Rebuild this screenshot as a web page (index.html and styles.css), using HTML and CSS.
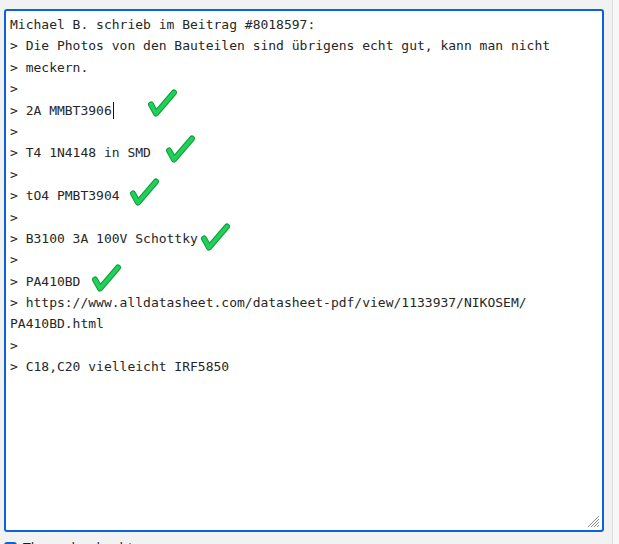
FILE: index.html
```html
<!DOCTYPE html>
<html lang="de">
<head>
<meta charset="utf-8">
<title>Antwort</title>
<link rel="stylesheet" href="styles.css">
</head>
<body>
<div class="column">
  <div class="editor">
    <div class="text">
      <div class="line">Michael B. schrieb im Beitrag #8018597:</div>
      <div class="line">&gt; Die Photos von den Bauteilen sind übrigens echt gut, kann man nicht</div>
      <div class="line">&gt; meckern.</div>
      <div class="line">&gt;</div>
      <div class="line">&gt; 2A MMBT3906<span class="caret"></span></div>
      <div class="line">&gt;</div>
      <div class="line">&gt; T4 1N4148 in SMD</div>
      <div class="line">&gt;</div>
      <div class="line">&gt; tO4 PMBT3904</div>
      <div class="line">&gt;</div>
      <div class="line">&gt; B3100 3A 100V Schottky</div>
      <div class="line">&gt;</div>
      <div class="line">&gt; PA410BD</div>
      <div class="line">&gt; https://www.alldatasheet.com/datasheet-pdf/view/1133937/NIKOSEM/</div>
      <div class="line">PA410BD.html</div>
      <div class="line">&gt;</div>
      <div class="line">&gt; C18,C20 vielleicht IRF5850</div>
    </div>

    <svg class="check c1" viewBox="0 0 29 28"><path class="edge" d="M3,15.5 L8,24.5 L26,3.5"/><path class="fill" d="M3,15.5 L8,24.5 L26,3.5"/></svg>
    <svg class="check c2" viewBox="0 0 29 28"><path class="edge" d="M3,15.5 L8,24.5 L26,3.5"/><path class="fill" d="M3,15.5 L8,24.5 L26,3.5"/></svg>
    <svg class="check c3" viewBox="0 0 29 28"><path class="edge" d="M3,15.5 L8,24.5 L26,3.5"/><path class="fill" d="M3,15.5 L8,24.5 L26,3.5"/></svg>
    <svg class="check c4" viewBox="0 0 29 28"><path class="edge" d="M3,15.5 L8,24.5 L26,3.5"/><path class="fill" d="M3,15.5 L8,24.5 L26,3.5"/></svg>
    <svg class="check c5" viewBox="0 0 29 28"><path class="edge" d="M3,15.5 L8,24.5 L26,3.5"/><path class="fill" d="M3,15.5 L8,24.5 L26,3.5"/></svg>

    <svg class="grip" viewBox="0 0 14 14">
      <path d="M13,2 L2,13 M13,5 L5,13 M13,8 L8,13 M13,11 L11,13" />
    </svg>
  </div>

  <label class="watch">
    <span class="box"></span>
    <span class="watch-text">Thema beobachten</span>
  </label>
</div>
</body>
</html>
```

FILE: styles.css
```css
html, body {
  margin: 0;
  padding: 0;
  height: 100%;
}

body {
  background: #f7f7f7;
  overflow: hidden;
}

.column {
  width: 613px;
  height: 100%;
  box-sizing: border-box;
  background: #f2f2f2;
  border-right: 1px solid #dedede;
  padding: 9px 0 0 4px;
}

.editor {
  position: relative;
  box-sizing: border-box;
  width: 600px;
  height: 523px;
  background: #fff;
  border: 2px solid #0b62d9;
  border-radius: 3px;
  padding: 3px 4px;
}

.text {
  font-family: "DejaVu Sans Mono", "Liberation Mono", monospace;
  font-size: 13px;
  line-height: 21.4px;
  color: #262626;
}

.line {
  white-space: pre;
  height: 21.4px;
}

.caret {
  display: inline-block;
  width: 1px;
  height: 17px;
  margin-left: 1px;
  background: #111;
  vertical-align: -4px;
}

.check {
  position: absolute;
  width: 29px;
  height: 28px;
  overflow: visible;
}

.check path {
  fill: none;
  stroke-linecap: round;
  stroke-linejoin: round;
}

.check .edge {
  stroke: #159a3c;
  stroke-width: 6;
}

.check .fill {
  stroke: #1fd158;
  stroke-width: 4;
}

.c1 { left: 142px; top: 78px; }
.c2 { left: 160px; top: 124px; }
.c3 { left: 124px; top: 167px; }
.c4 { left: 195px; top: 212px; }
.c5 { left: 86px; top: 253px; }

.grip {
  position: absolute;
  right: 2px;
  bottom: 2px;
  width: 14px;
  height: 14px;
}

.grip path {
  stroke: #8a8a8a;
  stroke-width: 1;
  fill: none;
}

.watch {
  display: flex;
  align-items: flex-start;
  gap: 6px;
  margin-top: 9px;
  font-family: "Open Sans", "Noto Sans", sans-serif;
  font-size: 14px;
  line-height: 18px;
  color: #1b1b1b;
}

.box {
  width: 13px;
  height: 13px;
  border-radius: 3px;
  background: #0b62d9;
  margin-top: 1px;
}

.watch-text {
  margin-top: -2px;
}
```
